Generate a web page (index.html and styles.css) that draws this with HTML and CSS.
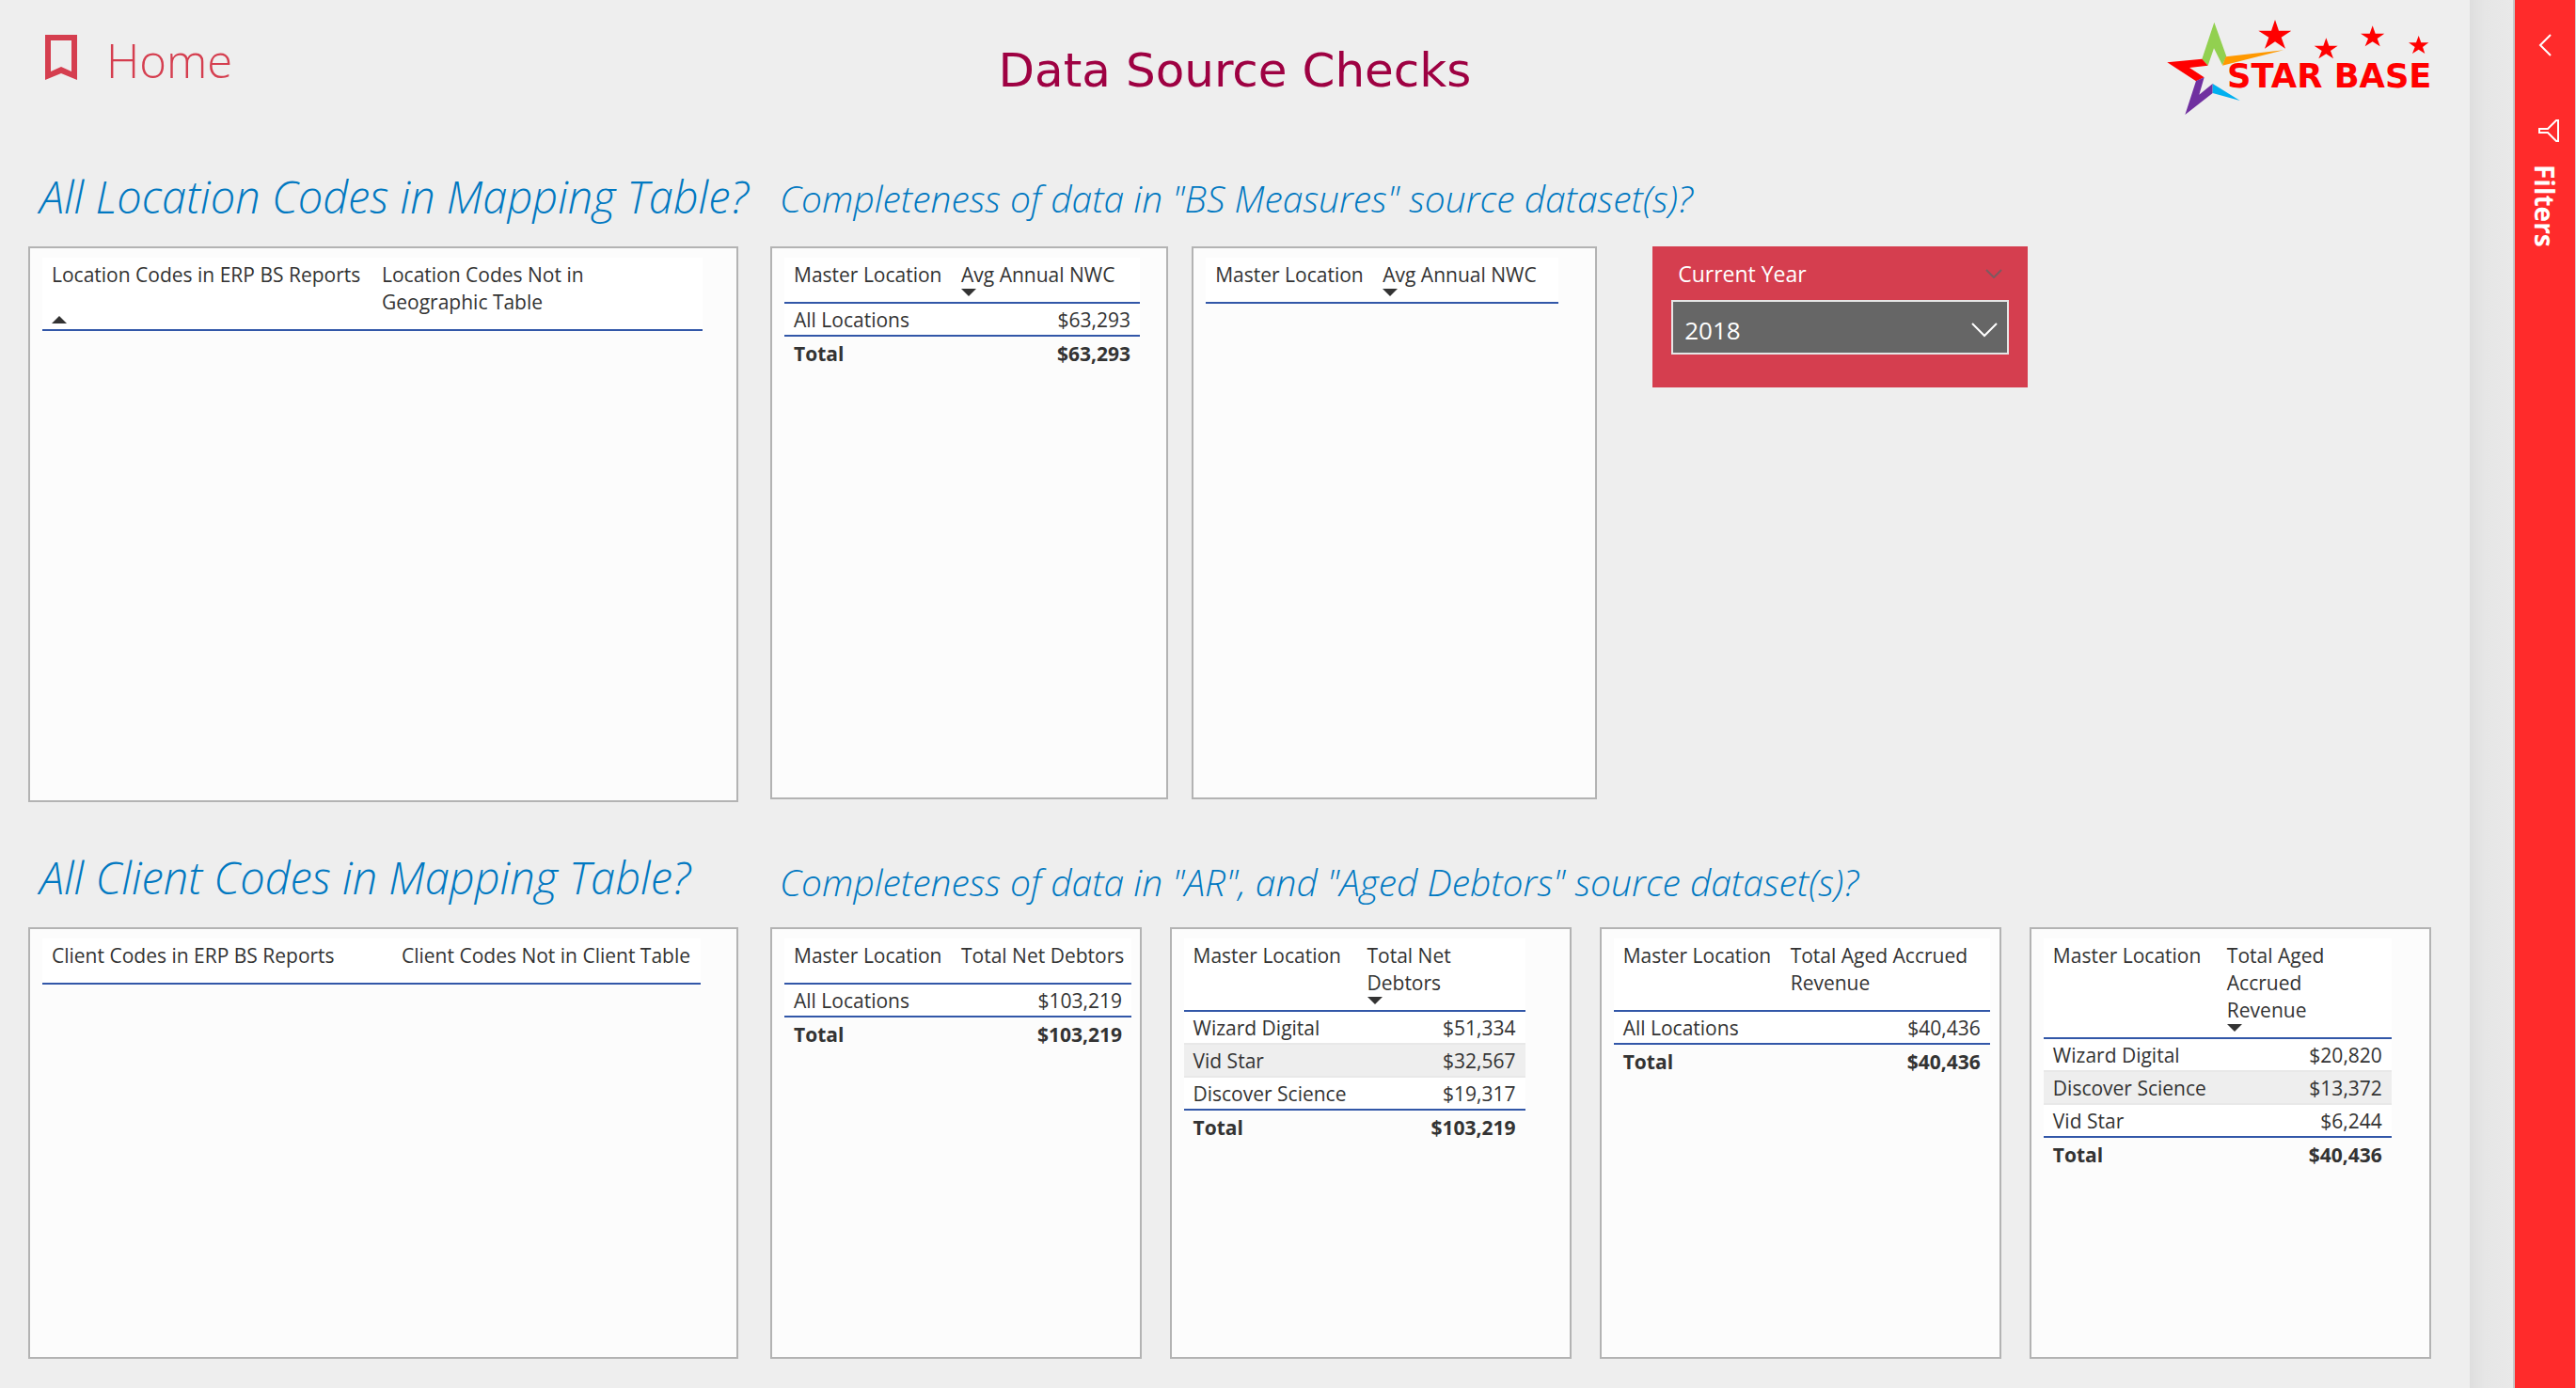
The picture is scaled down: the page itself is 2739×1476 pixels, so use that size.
FILE: index.html
```html
<!DOCTYPE html>
<html lang="en">
<head>
<meta charset="utf-8">
<title>Data Source Checks</title>
<link rel="stylesheet" href="styles.css">
</head>
<body>
<div class="app">
  <main class="report">
    <header class="report-header">
      <a class="home-link" href="#">
        <svg class="bookmark" viewBox="0 0 34 48" aria-hidden="true"><path fill-rule="evenodd" d="M0 0H34V48L17 41L0 48ZM6 6V39L17 34L28 39V6Z"/></svg>
        <span>Home</span>
      </a>
      <h1 class="report-title">Data Source Checks</h1>
      <div class="logo">
        <svg class="logo-mark" viewBox="100 60 861 309" role="img" aria-label="Star Base">
          <path fill="#92d050" d="M251 71L290 180L277 208L250 154L231 209L212 188Z"/>
          <path fill="#ff9900" d="M288 181L472 160L277 209Z"/>
          <path fill="#ff0000" d="M101 199L212 188L231 209L172 216L219 247L193 259Z"/>
          <path fill="#7030a0" d="M193 258L219 247L203 302L246 267V297L158 366Z"/>
          <path fill="#00b0f0" d="M246 267L333 321L246 297Z"/>
          <g fill="#ff0000">
            <path d="M445 63L457 98H497L465 119L478 155L445 133L412 155L425 119L392 98H433Z"/>
            <path d="M608 121L617 146H645L622 162L631 187L608 172L584 187L594 162L570 146H599Z"/>
            <path d="M756 82L765 107H794L771 123L780 148L756 133L732 148L742 123L718 107H747Z"/>
            <path d="M903 114L911 136H935L916 150L923 171L903 158L883 171L891 150L871 136H895Z"/>
          </g>
          <text class="logo-text" x="292" y="280">STAR BASE</text>
        </svg>
      </div>
    </header>

    <div class="row row-top">
      <section class="group">
        <h2 class="heading heading-large">All Location Codes in Mapping Table?</h2>
        <div class="panels">
          <div class="panel w-left">
            <table class="data">
              <colgroup><col class="c351"><col class="c351"></colgroup>
              <thead><tr><th scope="col">Location Codes in ERP BS Reports<i class="sort up"></i></th><th scope="col">Location Codes Not in<br>Geographic Table</th></tr></thead>
            </table>
          </div>
        </div>
      </section>
      <section class="group group-wide">
        <h2 class="heading">Completeness of data in "BS Measures" source dataset(s)?</h2>
        <div class="panels">
          <div class="panel w-nwc">
            <table class="data">
              <colgroup><col class="c178"><col class="c200"></colgroup>
              <thead><tr><th scope="col">Master Location</th><th scope="col">Avg Annual NWC<i class="sort down"></i></th></tr></thead>
              <tbody><tr><td>All Locations</td><td>$63,293</td></tr></tbody>
              <tfoot><tr><td>Total</td><td>$63,293</td></tr></tfoot>
            </table>
          </div>
          <div class="panel w-nwc-detail">
            <table class="data">
              <colgroup><col class="c178"><col class="c197"></colgroup>
              <thead><tr><th scope="col">Master Location</th><th scope="col">Avg Annual NWC<i class="sort down"></i></th></tr></thead>
            </table>
          </div>
          <div class="slicer-slot">
            <div class="slicer">
              <div class="slicer-head">
                <label for="year">Current Year</label>
                <svg class="chev-small" viewBox="0 0 18 10" aria-hidden="true"><path d="M1 1L9 9L17 1"/></svg>
              </div>
              <div class="select-wrap">
                <select id="year"><option>2018</option></select>
                <svg class="chev" viewBox="0 0 28 16" aria-hidden="true"><path d="M1 1L14 14L27 1"/></svg>
              </div>
            </div>
          </div>
        </div>
      </section>
    </div>

    <div class="row row-bottom">
      <section class="group">
        <h2 class="heading heading-large">All Client Codes in Mapping Table?</h2>
        <div class="panels">
          <div class="panel w-left">
            <table class="data">
              <colgroup><col class="c372"><col class="c328"></colgroup>
              <thead><tr><th scope="col">Client Codes in ERP BS Reports</th><th scope="col">Client Codes Not in Client Table</th></tr></thead>
            </table>
          </div>
        </div>
      </section>
      <section class="group group-wide">
        <h2 class="heading">Completeness of data in "AR", and "Aged Debtors" source dataset(s)?</h2>
        <div class="panels panels-even">
          <div class="panel w-debtors">
            <table class="data">
              <colgroup><col class="c178"><col class="c191"></colgroup>
              <thead><tr><th scope="col">Master Location</th><th scope="col">Total Net Debtors</th></tr></thead>
              <tbody><tr><td>All Locations</td><td>$103,219</td></tr></tbody>
              <tfoot><tr><td>Total</td><td>$103,219</td></tr></tfoot>
            </table>
          </div>
          <div class="panel">
            <table class="data">
              <colgroup><col class="c185"><col class="c178"></colgroup>
              <thead><tr><th scope="col">Master Location</th><th scope="col">Total Net<br>Debtors<i class="sort down"></i></th></tr></thead>
              <tbody>
                <tr><td>Wizard Digital</td><td>$51,334</td></tr>
                <tr><td>Vid Star</td><td>$32,567</td></tr>
                <tr><td>Discover Science</td><td>$19,317</td></tr>
              </tbody>
              <tfoot><tr><td>Total</td><td>$103,219</td></tr></tfoot>
            </table>
          </div>
          <div class="panel">
            <table class="data">
              <colgroup><col class="c178"><col class="c222"></colgroup>
              <thead><tr><th scope="col">Master Location</th><th scope="col">Total Aged Accrued<br>Revenue</th></tr></thead>
              <tbody><tr><td>All Locations</td><td>$40,436</td></tr></tbody>
              <tfoot><tr><td>Total</td><td>$40,436</td></tr></tfoot>
            </table>
          </div>
          <div class="panel">
            <table class="data">
              <colgroup><col class="c185"><col class="c185"></colgroup>
              <thead><tr><th scope="col">Master Location</th><th scope="col">Total Aged<br>Accrued<br>Revenue<i class="sort down"></i></th></tr></thead>
              <tbody>
                <tr><td>Wizard Digital</td><td>$20,820</td></tr>
                <tr><td>Discover Science</td><td>$13,372</td></tr>
                <tr><td>Vid Star</td><td>$6,244</td></tr>
              </tbody>
              <tfoot><tr><td>Total</td><td>$40,436</td></tr></tfoot>
            </table>
          </div>
        </div>
      </section>
    </div>
  </main>

  <div class="gutter"></div>
  <aside class="filters">
    <button class="filters-toggle" type="button" aria-label="Expand filters">
      <svg viewBox="0 0 14 24" aria-hidden="true"><path d="M13 1L2 12L13 23"/></svg>
    </button>
    <svg class="funnel" viewBox="0 0 22 24" aria-hidden="true"><path d="M1 10H10L19 1H21V23H19L10 14H1Z"/></svg>
    <span class="filters-label">Filters</span>
  </aside>
</div>
</body>
</html>
```
FILE: styles.css
```css
* { box-sizing: border-box; }

body {
  margin: 0;
  background: #eeeeee;
  color: #333333;
  font-family: "Open Sans", "Noto Sans", sans-serif;
  font-size: 21px;
}

.app {
  display: flex;
  min-height: 100vh;
}

.report {
  flex: 1;
  min-width: 0;
  padding: 0 41px 30px 30px;
}

/* header */
.report-header {
  display: grid;
  grid-template-columns: 1fr auto 1fr;
  align-items: start;
  height: 160px;
  margin-right: -11px;
}

.home-link {
  display: flex;
  align-items: flex-start;
  gap: 31px;
  padding: 28px 0 0 18px;
  color: #d53e4f;
  font-size: 49px;
  font-weight: 300;
  line-height: 72px;
  text-decoration: none;
}

.bookmark {
  width: 34px;
  height: 48px;
  margin-top: 9px;
  fill: #d53e4f;
}

.report-title {
  margin: 44px 0 0;
  color: #9e0142;
  font-family: "DejaVu Sans", sans-serif;
  font-size: 50px;
  font-weight: 400;
  line-height: 62px;
}

.logo {
  justify-self: end;
  padding: 20px 5px 0 0;
}

.logo-mark {
  display: block;
  width: 287px;
  height: 103px;
  overflow: visible;
}

.logo-text {
  fill: #ff0000;
  font-family: "DejaVu Sans", sans-serif;
  font-size: 106px;
  font-weight: 700;
}

/* rows of visuals */
.row {
  display: flex;
  gap: 34px;
}

.row-bottom { margin-top: 31px; }

.group {
  flex: 755 1 0;
  min-width: 0;
}

.group-wide { flex-grow: 1766; }

.heading {
  margin: 0;
  padding-left: 10px;
  height: 102px;
  color: #0078c1;
  font-size: 39px;
  font-style: italic;
  font-weight: 300;
  line-height: 102px;
  white-space: nowrap;
}

.row-bottom .heading { line-height: 108px; }

.row .heading-large {
  padding-left: 12px;
  font-size: 47px;
  line-height: 98px;
}

.panels {
  display: flex;
  gap: 25px;
}

.panels-even { gap: 30px; }

.panel {
  flex: 427 1 0;
  min-width: 0;
  padding: 10px 0 0 13px;
  border: 2px solid #b3b3b3;
  background: #fcfcfc;
}

.row-top .panel { min-height: 588px; }
.row-top .w-left { min-height: 591px; }
.row-bottom .panel { min-height: 459px; }

.row-top .panels { align-items: flex-start; }

.w-nwc { flex-grow: 423; }
.w-nwc-detail { flex-grow: 431; }
.w-debtors { flex-grow: 393; }
.slicer-slot { flex: 862 1 0; padding-left: 34px; }

/* tables */
.data {
  border-collapse: separate;
  border-spacing: 0;
  table-layout: fixed;
  width: min-content;
}

.c178 { width: 178px; }
.c185 { width: 185px; }
.c191 { width: 191px; }
.c197 { width: 197px; }
.c200 { width: 200px; }
.c222 { width: 222px; }
.c328 { width: 328px; }
.c351 { width: 351px; }
.c372 { width: 372px; }

.data th {
  position: relative;
  padding: 4px 0 14px 10px;
  border-bottom: 2px solid #3257a8;
  background: #ffffff;
  font-weight: 400;
  line-height: 29px;
  text-align: left;
  vertical-align: top;
  white-space: nowrap;
}

.sort {
  position: absolute;
  bottom: 6px;
  left: 10px;
  border: 0 solid transparent;
  border-width: 0 8px;
}

.sort.up { border-bottom: 8px solid #333333; }
.sort.down { border-top: 8px solid #333333; }

.data td {
  height: 35px;
  padding: 2px 10px 0;
  border-bottom: 2px solid #e8e8e8;
  background: #ffffff;
  line-height: 31px;
  white-space: nowrap;
}

.data td + td { text-align: right; }
.data tbody tr:nth-child(even) td { background: #eeeeee; }
.data tbody tr:last-child td { border-bottom-color: #3257a8; }

.data tfoot td {
  border: 0;
  background: none;
  font-weight: 700;
}

/* year slicer */
.slicer {
  width: 399px;
  height: 150px;
  padding: 0 20px;
  background: #d53e4f;
  color: #ffffff;
}

.slicer-head {
  display: flex;
  align-items: center;
  justify-content: space-between;
  height: 57px;
  padding: 0 7px;
  font-size: 23px;
}

.chev-small {
  width: 18px;
  height: 10px;
  fill: none;
  stroke: #7d5a60;
  stroke-width: 2;
}

.select-wrap { position: relative; }

.select-wrap select {
  appearance: none;
  display: block;
  width: 100%;
  height: 58px;
  padding: 6px 12px 0;
  border: 2px solid #e6e6e6;
  border-radius: 0;
  background: #666666;
  color: #ffffff;
  font: inherit;
  font-size: 26px;
}

.chev {
  position: absolute;
  top: 24px;
  right: 12px;
  width: 28px;
  height: 16px;
  fill: none;
  stroke: #ffffff;
  stroke-width: 2;
  pointer-events: none;
}

/* collapsed filter pane */
.gutter {
  width: 46px;
  background: linear-gradient(to right, #dedede, #e6e6e6 16px, #e9e9e9);
}

.filters {
  display: flex;
  flex-direction: column;
  align-items: center;
  width: 67px;
  padding-top: 36px;
  border-right: 1px solid #d0d0d0;
  border-left: 2px solid #c8c8c8;
  background: #ff2b2b;
  color: #ffffff;
}

.filters-toggle {
  padding: 0;
  border: 0;
  background: none;
}

.filters svg {
  display: block;
  fill: none;
  stroke: #ffffff;
  stroke-width: 2;
}

.filters-toggle svg { width: 14px; height: 24px; }

.funnel {
  width: 22px;
  height: 24px;
  margin: 67px 0 24px 8px;
}

.filters-label {
  font-size: 28px;
  font-weight: 700;
  line-height: 40px;
  writing-mode: vertical-rl;
}
```
